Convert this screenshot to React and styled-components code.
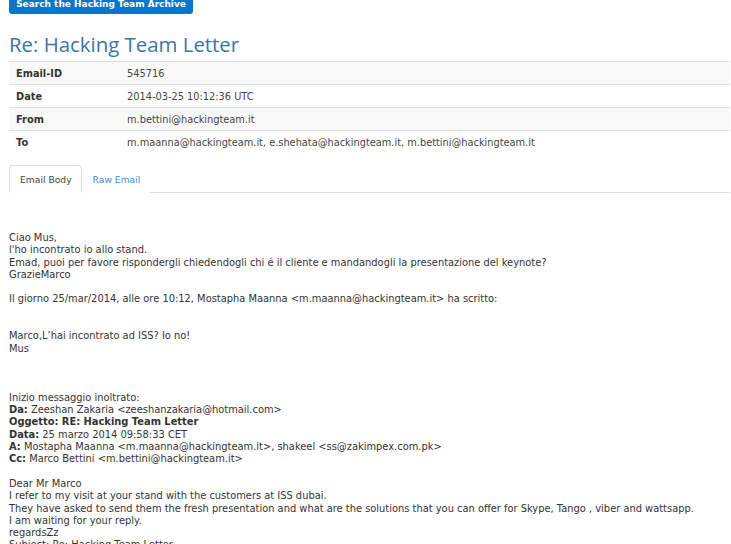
import React, { useState } from "react";
import styled, { createGlobalStyle } from "styled-components";

const GlobalStyle = createGlobalStyle`
  html, body {
    margin: 0;
    padding: 0;
    background: #fff;
    overflow: hidden;
  }
  body {
    font-family: "DejaVu Sans", Verdana, sans-serif;
    color: #333;
  }
`;

const Page = styled.div`
  padding: 0 1px 0 9px;
  margin-top: -8px;
`;

const SearchButton = styled.a`
  display: inline-flex;
  align-items: center;
  justify-content: center;
  width: 184px;
  height: 20px;
  background: #0b76c9;
  border-radius: 3px;
  color: #fff;
  font-size: 9px;
  font-weight: bold;
  white-space: nowrap;
  text-decoration: none;
`;

const Title = styled.h2`
  margin: 17px 0 4px;
  font-family: "Open Sans", sans-serif;
  font-weight: normal;
  font-size: 20.4px;
  line-height: 26px;
  color: #3a76a4;
`;

const MetaTable = styled.table`
  width: 100%;
  border-collapse: collapse;
  font-size: 9.8px;
`;

const MetaRow = styled.tr`
  background: ${(p) => (p.$shaded ? "#f9f9f9" : "#fff")};
  border-top: 1px solid #ddd;
`;

const Label = styled.th`
  width: 111px;
  height: 22px;
  padding: 0 0 0 7px;
  text-align: left;
  font-weight: bold;
  color: #333;
`;

const Value = styled.td`
  padding: 0;
  color: #444;
`;

const Tabs = styled.ul`
  display: flex;
  margin: 12px 0 0;
  padding: 0;
  list-style: none;
  border-bottom: 1px solid #ddd;
  font-size: 9.2px;
`;

const Tab = styled.li`
  margin-bottom: -1px;
  padding: 0 9px 0 10px;
  height: 26px;
  display: flex;
  align-items: center;
  border: 1px solid ${(p) => (p.$active ? "#ddd" : "transparent")};
  border-bottom-color: ${(p) => (p.$active ? "#fff" : "transparent")};
  border-radius: 4px 4px 0 0;
  background: #fff;
  color: ${(p) => (p.$active ? "#444" : "#3a8fd3")};
  cursor: pointer;
`;

const Body = styled.div`
  padding: 39px 0 0;
  font-size: 9.9px;
  line-height: 12.3px;
  color: #333;
  white-space: pre-wrap;
`;

const Line = styled.div`
  min-height: 12.3px;
`;

const meta = [
  ["Email-ID", "545716"],
  ["Date", "2014-03-25 10:12:36 UTC"],
  ["From", "m.bettini@hackingteam.it"],
  ["To", "m.maanna@hackingteam.it, e.shehata@hackingteam.it, m.bettini@hackingteam.it"],
];

const bodyLines = [
  ["Ciao Mus,"],
  ["l'ho incontrato io allo stand."],
  ["Emad, puoi per favore rispondergli chiedendogli chi é il cliente e mandandogli la presentazione del keynote?"],
  ["GrazieMarco"],
  [""],
  ["Il giorno 25/mar/2014, alle ore 10:12, Mostapha Maanna <m.maanna@hackingteam.it> ha scritto:"],
  [""],
  [""],
  ["Marco,L’hai incontrato ad ISS? Io no!"],
  ["Mus"],
  [""],
  [""],
  [""],
  ["Inizio messaggio inoltrato:"],
  ["Da:", " Zeeshan Zakaria <zeeshanzakaria@hotmail.com>"],
  ["Oggetto: RE: Hacking Team Letter", ""],
  ["Data:", " 25 marzo 2014 09:58:33 CET"],
  ["A:", " Mostapha Maanna <m.maanna@hackingteam.it>, shakeel <ss@zakimpex.com.pk>"],
  ["Cc:", " Marco Bettini <m.bettini@hackingteam.it>"],
  [""],
  ["Dear Mr Marco"],
  ["I refer to my visit at your stand with the customers at ISS dubai."],
  ["They have asked to send them the fresh presentation and what are the solutions that you can offer for Skype, Tango , viber and wattsapp."],
  ["I am waiting for your reply."],
  ["regardsZz"],
  ["Subject: Re: Hacking Team Letter"],
];

export default function App() {
  const [tab, setTab] = useState("body");

  return (
    <>
      <GlobalStyle />
      <Page>
        <SearchButton href="#">Search the Hacking Team Archive</SearchButton>
        <Title>Re: Hacking Team Letter</Title>
        <MetaTable>
          <tbody>
            {meta.map(([k, v], i) => (
              <MetaRow key={k} $shaded={i % 2 === 0}>
                <Label>{k}</Label>
                <Value>{v}</Value>
              </MetaRow>
            ))}
          </tbody>
        </MetaTable>
        <Tabs>
          <Tab $active={tab === "body"} onClick={() => setTab("body")}>
            Email Body
          </Tab>
          <Tab $active={tab === "raw"} onClick={() => setTab("raw")}>
            Raw Email
          </Tab>
        </Tabs>
        <Body>
          {bodyLines.map((l, i) => (
            <Line key={i}>
              {l.length === 2 ? (
                <>
                  <b>{l[0]}</b>
                  {l[1]}
                </>
              ) : (
                l[0]
              )}
            </Line>
          ))}
        </Body>
      </Page>
    </>
  );
}
